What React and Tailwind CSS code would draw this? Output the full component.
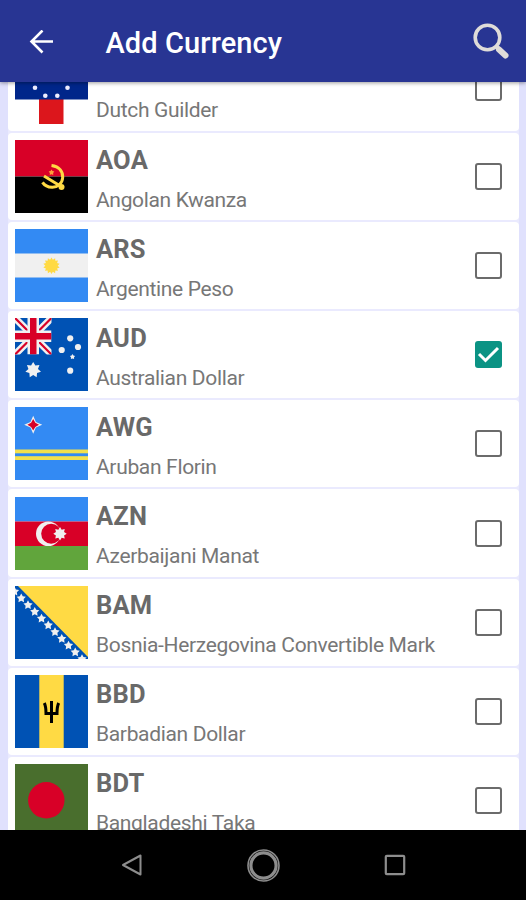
function starPoints(cx, cy, outer, inner, points) {
  return Array.from({ length: points * 2 }, (_, i) => {
    const r = i % 2 === 0 ? outer : inner
    const a = (Math.PI * i) / points - Math.PI / 2
    return `${(cx + r * Math.cos(a)).toFixed(2)},${(cy + r * Math.sin(a)).toFixed(2)}`
  }).join(' ')
}

function Star({ cx, cy, outer, inner, points = 5, fill = '#fff' }) {
  return <polygon points={starPoints(cx, cy, outer, inner, points)} fill={fill} />
}

function Flag({ children }) {
  return (
    <svg viewBox="0 0 73 73" className="size-[73px] shrink-0 overflow-hidden">
      {children}
    </svg>
  )
}

const flags = {
  ANG: (
    <>
      <rect width="73" height="73" fill="#fff" />
      <rect x="24" width="24.5" height="73" fill="#dc161c" />
      <rect y="24" width="73" height="24.5" fill="#00268a" />
      <circle cx="20" cy="36.7" r="2.3" fill="#eef" />
      <circle cx="52.5" cy="36.7" r="2.3" fill="#eef" />
      <circle cx="30.3" cy="44.7" r="2.3" fill="#eef" />
      <circle cx="42.3" cy="44.7" r="2.3" fill="#eef" />
    </>
  ),
  AOA: (
    <>
      <rect width="73" height="36.5" fill="#d80027" />
      <rect y="36.5" width="73" height="36.5" fill="#000" />
      <path d="M36.500 25.500c8 1 11.500 6 11.200 12-.4 6-5 10-10.700 9.800-4-.2-7.500-2-9.500-5" fill="none" stroke="#ffda44" strokeWidth="3" />
      <path d="M29 36l19.500 12" fill="none" stroke="#ffda44" strokeWidth="3" />
      <circle cx="46.5" cy="47" r="3" fill="#ffda44" />
      <Star cx={36.5} cy={32.5} outer={3} inner={1.7} fill="#ffa03b" />
    </>
  ),
  ARS: (
    <>
      <rect width="73" height="73" fill="#338af3" />
      <rect y="24.5" width="73" height="24" fill="#f0f0f0" />
      <Star cx={36.5} cy={36.7} outer={8.3} inner={6.2} points={14} fill="#ffda44" />
    </>
  ),
  AUD: (
    <>
      <rect width="73" height="73" fill="#0052b4" />
      <svg width="36.5" height="36.5" viewBox="0 0 36.5 36.5">
        <path d="M0 0l36.500 36.500M36.500 0L0 36.500" stroke="#f0f0f0" strokeWidth="7" />
        <path d="M0 0l36.500 36.500M36.500 0L0 36.500" stroke="#d80027" strokeWidth="2.2" />
        <path d="M18.250 0v36.500M0 18.250h36.500" stroke="#f0f0f0" strokeWidth="11.5" />
        <path d="M18.250 0v36.500M0 18.250h36.500" stroke="#d80027" strokeWidth="6.5" />
      </svg>
      <Star cx={18.2} cy={52} outer={8} inner={4.9} points={7} fill="#f0f0f0" />
      <circle cx="55.2" cy="20.3" r="3.1" fill="#f0f0f0" />
      <circle cx="46.7" cy="32" r="3.1" fill="#f0f0f0" />
      <circle cx="63" cy="29" r="3.1" fill="#f0f0f0" />
      <circle cx="55.2" cy="52.7" r="3.1" fill="#f0f0f0" />
      <Star cx={57.5} cy={38.8} outer={2.7} inner={1.6} fill="#f0f0f0" />
    </>
  ),
  AWG: (
    <>
      <rect width="73" height="73" fill="#338af3" />
      <rect y="42.5" width="73" height="3.8" fill="#f3e04c" />
      <rect y="49.2" width="73" height="3.8" fill="#f3e04c" />
      <Star cx={18.2} cy={17.8} outer={9} inner={3.8} points={4} fill="#f0f0f0" />
      <Star cx={18.2} cy={17.8} outer={5.8} inner={3} points={4} fill="#d80027" />
    </>
  ),
  AZN: (
    <>
      <rect width="73" height="24.5" fill="#338af3" />
      <rect y="24.5" width="73" height="24.5" fill="#d80027" />
      <rect y="49" width="73" height="24" fill="#61a53c" />
      <circle cx="33.3" cy="36.7" r="12.3" fill="#f0f0f0" />
      <circle cx="36.2" cy="36.7" r="10" fill="#d80027" />
      <Star cx={45} cy={36.7} outer={6.7} inner={4.4} points={8} fill="#f0f0f0" />
    </>
  ),
  BAM: (
    <>
      <rect width="73" height="73" fill="#0052b4" />
      <path d="M3 0h70v71z" fill="#ffda44" />
      {Array.from({ length: 11 }, (_, i) => (
        <Star key={i} cx={-0.5 + i * 6.75} cy={5.5 + i * 6.75} outer={4.8} inner={2.5} fill="#f0f0f0" />
      ))}
    </>
  ),
  BBD: (
    <>
      <rect width="73" height="73" fill="#0052b4" />
      <rect x="24.3" width="24.4" height="73" fill="#ffda44" />
      <path d="M36.500 26v22M29.300 28c1.500 3 1.700 6 1.700 10.500h11c0-4.500.2-7.500 1.700-10.500" fill="none" stroke="#000" strokeWidth="3" />
    </>
  ),
  BDT: (
    <>
      <rect width="73" height="73" fill="#496e2d" />
      <circle cx="31.3" cy="36.3" r="18.2" fill="#d80027" />
    </>
  ),
}

const currencies = [
  { flag: 'ANG', name: 'Dutch Guilder' },
  { flag: 'AOA', code: 'AOA', name: 'Angolan Kwanza' },
  { flag: 'ARS', code: 'ARS', name: 'Argentine Peso' },
  { flag: 'AUD', code: 'AUD', name: 'Australian Dollar', checked: true },
  { flag: 'AWG', code: 'AWG', name: 'Aruban Florin' },
  { flag: 'AZN', code: 'AZN', name: 'Azerbaijani Manat' },
  { flag: 'BAM', code: 'BAM', name: 'Bosnia-Herzegovina Convertible Mark' },
  { flag: 'BBD', code: 'BBD', name: 'Barbadian Dollar' },
  { flag: 'BDT', code: 'BDT', name: 'Bangladeshi Taka' },
]

function Checkbox({ checked }) {
  if (checked) {
    return (
      <span className="flex size-[27px] items-center justify-center rounded-[3px] bg-[#0b9384]">
        <svg viewBox="0 0 27 27" className="size-[27px]">
          <path d="M4 13l6.500 6.500L23 7" fill="none" stroke="#fff" strokeWidth="3" />
        </svg>
      </span>
    )
  }
  return <span className="block size-[27px] rounded-[3px] border-[2.5px] border-[#6b6b6b]" />
}

function CurrencyRow({ flag, code, name, checked }) {
  return (
    <li className="flex h-[87.14px] shrink-0 items-center rounded-[4px] bg-white pr-[17px] pl-[7px]">
      <Flag>{flags[flag]}</Flag>
      <div className="ml-2 flex-1 pt-[6px] whitespace-nowrap">
        <p className="h-[41px] text-[25.5px] leading-[40px] font-bold tracking-[0.2px] text-[#696969]">{code}</p>
        <p className="text-[21px] leading-[39px] tracking-[-0.33px] text-[#777]">{name}</p>
      </div>
      <Checkbox checked={checked} />
    </li>
  )
}

export default function App() {
  return (
    <div className="flex h-[900px] w-[526px] flex-col overflow-hidden bg-[#e0e1fd] font-[Roboto,sans-serif]">
      <header className="z-10 flex h-[81.5px] shrink-0 items-center bg-[#283593] pt-[3px] pr-[16px] pl-[29px] shadow-[0_1px_4px_rgba(0,0,0,0.4)]">
        <svg viewBox="0 0 25 25" className="size-[25px]" fill="none" stroke="#fff" strokeWidth="2.6">
          <path d="M24 11.500H3M13.500.5l-11 11 11 11" />
        </svg>
        <h1 className="ml-[51.5px] flex-1 pt-[2px] text-[29px] leading-none font-medium tracking-[0.1px] text-white">Add Currency</h1>
        <svg viewBox="0 0 38 38" className="size-[38px]" fill="none" stroke="#dfdcd9">
          <circle cx="15.5" cy="14.5" r="12.3" strokeWidth="3.6" />
          <path d="M24 23l3 3" strokeWidth="4" />
          <path d="M27 26.500l6.500 6" strokeWidth="6" strokeLinecap="round" />
        </svg>
      </header>

      <main className="min-h-0 flex-1 overflow-hidden pr-[7px] pl-2">
        <ul className="-mt-[37.7px] flex flex-col gap-[2px] bg-[#eaeafe]">
          {currencies.map((c) => (
            <CurrencyRow key={c.flag} {...c} />
          ))}
        </ul>
      </main>

      <nav className="flex h-[70px] shrink-0 items-center justify-between bg-black pr-[120px] pl-[121px] text-[#8d8d8d]">
        <svg viewBox="0 0 22 24" className="h-6 w-[22px]" fill="none" stroke="currentColor" strokeWidth="2">
          <path d="M19.500 2.500v19L2 12z" strokeLinejoin="round" />
        </svg>
        <svg viewBox="0 0 34 34" className="size-[34px]" fill="none" stroke="currentColor">
          <circle cx="16.5" cy="17.5" r="15.5" strokeWidth="1.6" />
          <circle cx="16.5" cy="17.5" r="12.6" strokeWidth="3.2" />
        </svg>
        <svg viewBox="0 0 22 22" className="size-[22px]" fill="none" stroke="currentColor" strokeWidth="2.2">
          <rect x="1.8" y="1.8" width="18.4" height="18.4" rx="1" />
        </svg>
      </nav>
    </div>
  )
}
